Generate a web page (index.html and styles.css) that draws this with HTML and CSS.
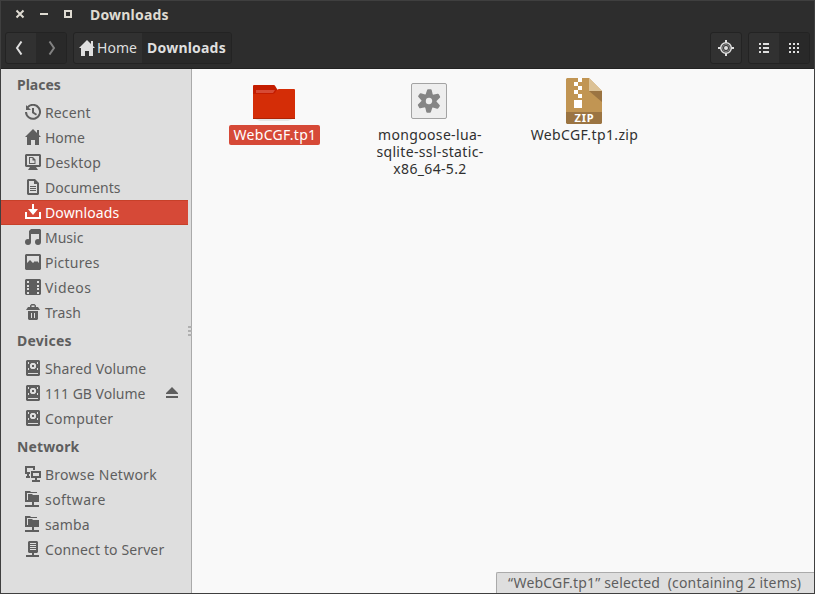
FILE: index.html
```
<!DOCTYPE html>
<html lang="en">
<head>
<meta charset="utf-8">
<title>Downloads</title>
<link rel="stylesheet" href="styles.css">
</head>
<body>
<svg class="defs" aria-hidden="true">
  <symbol id="home" viewBox="0 0 16 16"><path d="M8 0 0 8h2v8h4v-5h4v5h4V8h2l-2-2V1h-2v3z"/></symbol>
  <symbol id="drive" viewBox="0 0 16 16"><path fill-rule="evenodd" d="M2 0h12l1 1v14l-1 1H2l-1-1V1zM3 13v1h10v-1zM3 2v2h1V2zM12 2v2h1V2zM3 8v2h1V8zM12 8v2h1V8zM6.500 3 5 4.500v3L6.500 9h3L11 7.500v-3L9.500 3zM7 5h2v2H7z"/></symbol>
  <symbol id="share" viewBox="0 0 16 16"><path d="M0 0h5l1 1h6v1H2v9H0zM3 3h4l1 1h6v7H3zM7 11h2v3h5v2H0v-2h7zM0 9h3v2H0z"/></symbol>
</svg>
<div class="window">
  <header class="header">
    <div class="titlebar">
      <svg class="controls" width="58" height="10" viewBox="0 0 58 10"><path class="line" d="m1.500 1.500 7 7m0-7-7 7M25 5h8"/><path class="line" d="M50 2h6v6h-6z"/></svg>
      <h1>Downloads</h1>
    </div>
    <div class="toolbar">
      <div class="group nav">
        <button class="square back"><svg width="8" height="14" viewBox="0 0 8 14"><path class="line" d="M6.500.5 2 7l4.500 6.500"/></svg></button>
        <button class="square off"><svg width="8" height="14" viewBox="0 0 8 14"><path class="line" d="M1.500.5 6 7l-4.500 6.500"/></svg></button>
      </div>
      <div class="group path">
        <button class="crumb"><svg class="i16"><use href="#home"/></svg><span class="t-home">Home</span></button>
        <button class="crumb current"><span>Downloads</span></button>
      </div>
      <div class="group locate">
        <button class="square"><svg class="i16" viewBox="0 0 16 16"><circle cx="8" cy="8" r="5.300" class="ring"/><circle cx="8" cy="8" r="3.500" class="ring dim"/><circle cx="8" cy="8" r="2"/><path d="M7 0h2v3H7zM7 13h2v3H7zM0 7h3v2H0zM13 7h3v2h-3z"/></svg></button>
      </div>
      <div class="group views">
        <button class="square"><svg class="crisp" width="10" height="10"><path d="M0 0h2v2H0zM4 0h6v2H4zM0 4h2v2H0zM4 4h6v2H4zM0 8h2v2H0zM4 8h6v2H4z"/></svg></button>
        <button class="square on"><svg class="crisp" width="10" height="10"><path d="M0 0h2v2H0zM4 0h2v2H4zM8 0h2v2H8zM0 4h2v2H0zM4 4h2v2H4zM8 4h2v2H8zM0 8h2v2H0zM4 8h2v2H4zM8 8h2v2H8z"/></svg></button>
      </div>
    </div>
  </header>
  <main class="body">
    <aside class="sidebar">
      <h2>Places</h2>
      <ul>
        <li class="slight"><svg class="i16" viewBox="0 0 16 16"><path class="stroke" d="M2.500 3.500A7 7 0 1 1 1 8"/><path d="M1 1v5h5L4.500 4.500 3 3zM7 4h2v4l3 2-1 1.500L7 9z"/></svg><span>Recent</span></li>
        <li><svg class="i16"><use href="#home"/></svg><span>Home</span></li>
        <li class="wide"><svg class="i16" viewBox="0 0 16 16"><path fill-rule="evenodd" d="M1 0h14l1 1v11l-1 1h-4l2 3H3l2-3H1l-1-1V1zM2 2v9h12V2zM4 3h4l2.500 2.500V10H4zM5 4v5h4.500V6.500h-2V4z"/></svg><span>Desktop</span></li>
        <li><svg class="i16" viewBox="0 0 16 16"><path fill-rule="evenodd" d="M3 0h7l4 4v11l-1 1H3l-1-1V1zM4 2v12h8V5H9V2zM5 7h6v1H5zM5 9h6v1H5zM5 11h6v1H5z"/></svg><span>Documents</span></li>
        <li class="active slight"><svg class="i16" viewBox="0 0 16 16"><path d="M7 0h2v5h4L8 11 3 5h4zM0 8h2v5h12V8h2v7H0z"/></svg><span>Downloads</span></li>
        <li><svg class="i16" viewBox="0 0 16 16"><path d="M4 2 6 0h9l1 1v12h-2V5H6v8H4z"/><circle cx="3" cy="13" r="3"/><circle cx="13" cy="13" r="3"/></svg><span>Music</span></li>
        <li class="wide"><svg class="i16" viewBox="0 0 16 16"><path fill-rule="evenodd" d="M1 0h14l1 1v14l-1 1H1l-1-1V1zM2 2v7l3-3 3 3 2-2 1 1 1-1 2 2V2z"/></svg><span>Pictures</span></li>
        <li class="wider"><svg class="i16" viewBox="0 0 16 16"><path fill-rule="evenodd" d="M1 0h14l1 1v14l-1 1H1l-1-1V1zM2 2v2h2V2zM2 6v2h2V6zM2 9v2h2V9zM2 13v2h2v-2zM12 2v2h2V2zM12 6v2h2V6zM12 9v2h2V9zM12 13v2h2v-2z"/></svg><span>Videos</span></li>
        <li><svg class="i16" viewBox="0 0 16 16"><path fill-rule="evenodd" d="M5 3V1.500L6.500 0h3L11 1.500V3h2l2 3H1l2-3zM6.500 3h3V1.500h-3zM3 7h10v8l-1 1H4l-1-1zM6 9v5h1V9zM9 9v5h1V9z"/></svg><span>Trash</span></li>
      </ul>
      <h2 class="wide">Devices</h2>
      <ul>
        <li class="slight"><svg class="i16"><use href="#drive"/></svg><span>Shared Volume</span></li>
        <li><svg class="i16"><use href="#drive"/></svg><span>111 GB Volume</span><svg class="eject" width="12" height="12"><path d="m6 0 6 6v1H0V6zM0 9h12v2H0z"/></svg></li>
        <li class="wide"><svg class="i16"><use href="#drive"/></svg><span>Computer</span></li>
      </ul>
      <h2 class="slight">Network</h2>
      <ul>
        <li class="wide"><svg class="i16" viewBox="0 0 16 16"><path fill-rule="evenodd" d="M0 0h10v4H8V2H2v4h3v2H4v2h1v2H1v-2h1V8H0zM6 5h10v7h-4v2h3v2H7v-2h3v-2H6zM8 7v3h6V7z"/></svg><span>Browse Network</span></li>
        <li class="wider"><svg class="i16"><use href="#share"/></svg><span>software</span></li>
        <li class="slight"><svg class="i16"><use href="#share"/></svg><span>samba</span></li>
        <li class="slight"><svg class="i16" viewBox="0 0 16 16"><path fill-rule="evenodd" d="M4 0h8l1 1v10l-1 1H9v2h5v2H1v-2h6v-2H4l-1-1V1zM5 2v1h6V2zM5 4v1h6V4zM5 6v1h6V6zM5 8v1h6V8z"/></svg><span>Connect to Server</span></li>
      </ul>
      <div class="grip"><i></i><i></i><i></i></div>
    </aside>
    <section class="files">
      <figure>
        <svg width="48" height="48" viewBox="0 0 48 48"><path fill="#000" opacity=".08" d="M5 42h38l-5 2H10z"/><path fill="#c41d00" d="M3 9q0-1 1-1h20q1 0 1.500 1.500L27 12v10H3z"/><path fill="#d42d07" d="M3 17h20q2 0 3-3 1-2 3-2h15q1 0 1 1v29H3z"/><path fill="#d64a35" d="M6 13h19l-2 3H6z"/><path fill="#ad2404" d="M3 41h42v1H3z"/></svg>
        <figcaption class="selected">WebCGF.tp1</figcaption>
      </figure>
      <figure>
        <svg width="48" height="48" viewBox="0 0 48 48"><rect x="6.500" y="6.500" width="35" height="35" rx="1.500" fill="#eee" stroke="#a3a3a3"/><g transform="translate(24 24) rotate(2)" fill="#858585"><path id="tooth" d="M-2.300-11q.2-.8 1-.8h2.600q.8 0 1 .8L4-5h-8z"/><use href="#tooth" transform="rotate(60)"/><use href="#tooth" transform="rotate(120)"/><use href="#tooth" transform="rotate(180)"/><use href="#tooth" transform="rotate(240)"/><use href="#tooth" transform="rotate(300)"/><circle r="5.200" fill="none" stroke="#858585" stroke-width="4"/></g></svg>
        <figcaption class="mongoose">mongoose-lua-<br>sqlite-ssl-static-<br>x86_64-5.2</figcaption>
      </figure>
      <figure>
        <svg width="48" height="48" viewBox="0 0 48 48"><path fill="#c19553" d="M7 1h22l13 13v21H6V2z"/><path fill="#9b7442" d="m29 14 13 11V14z"/><path fill="#dcc296" d="M29 1v13h13z"/><path fill="#9b7442" d="M6 35h36v11l-1 1H7l-1-1z"/><path fill="#fff" d="M18 1h4v4h-4zM14 5h4v4h-4zM18 9h4v4h-4zM14 13h4v4h-4zM18 17h4v4h-4zM14 23h8v8h-8z"/><text x="24.500" y="45">ZIP</text></svg>
        <figcaption class="zip">WebCGF.tp1.zip</figcaption>
      </figure>
      <footer class="status">“WebCGF.tp1” selected&nbsp; (containing 2 items)</footer>
    </section>
  </main>
</div>
</body>
</html>
```

FILE: styles.css
```
* { box-sizing: border-box; }
body { margin: 0; font: 14px/17px "Noto Sans", "Open Sans", sans-serif; }
.defs { position: absolute; width: 0; height: 0; }
svg { display: block; flex: none; fill: currentColor; }
.i16 { width: 16px; height: 16px; }
.crisp { shape-rendering: crispEdges; }
.line, .ring, .stroke { fill: none; stroke: currentColor; stroke-width: 2; }
.ring { stroke-width: 1.5; }
.dim { stroke-width: 1; opacity: .5; }
.slight { letter-spacing: .12px; }
.wide { letter-spacing: .25px; }
.wider { letter-spacing: .45px; }

.window {
  width: 815px; height: 594px;
  display: flex; flex-direction: column;
  border: 1px solid #3f3f3f;
  background: #f9f9f9;
}
.header { height: 68px; background: #2d2d2d; color: #dfdbd2; border-bottom: 1px solid #222; }
.titlebar { height: 27px; display: flex; align-items: flex-start; padding: 5px 0 0 14px; gap: 17px; }
.controls { margin-top: 3px; }
h1 { margin: 0; font-size: 14px; line-height: 17px; font-weight: 700; letter-spacing: .2px; }
.toolbar { display: flex; padding: 4px 4px 0; height: 36px; }
.group { display: flex; height: 32px; border: 1px solid #232323; border-radius: 3px; overflow: hidden; background: #313131; }
.nav, .views { width: 62px; }
.path { margin-left: 6px; width: 159px; }
.locate { margin-left: auto; width: 32px; }
.views { margin-left: 6px; }
button { border: 0; padding: 0; background: none; color: #dfdfdf; font: inherit; display: flex; align-items: center; justify-content: center; }
.square { width: 30px; }
.back { padding-right: 4px; }
.off { background: #292929; color: #828282; padding-left: 2px; }
.on, .current { background: #292929; }
.crumb { width: 68px; gap: 2px; padding-bottom: 1px; }
.current { width: 89px; font-weight: 700; letter-spacing: .2px; }

.body { flex: 1; display: flex; min-height: 0; }
.sidebar { position: relative; width: 191px; background: #dedede; border-right: 1px solid #aaa; color: #5e5e5e; }
h2 { margin: 0; height: 31px; padding: 7px 0 0 16px; font-size: 14px; line-height: 17px; font-weight: 700; }
ul { list-style: none; margin: 0; padding: 0 3px 0 0; }
li { height: 25px; display: flex; align-items: flex-start; gap: 4px; padding: 4px 10px 0 24px; white-space: nowrap; }
.active { background: #d64937; color: #fff; border: solid #c74029; border-width: 1px 0; padding-top: 3px; }
.eject { margin: 2px 0 0 auto; }
.grip { position: absolute; right: -1px; top: 257px; display: grid; gap: 2px; }
.grip i { width: 4px; height: 2px; background: #b0b0b0; }

.files { position: relative; flex: 1; display: flex; align-items: flex-start; padding: 8px 0 0 5px; color: #303030; }
figure { margin: 0; width: 155px; display: flex; flex-direction: column; align-items: center; }
figure > svg { margin-right: 1px; }
figcaption { padding: 1px 5px 2px; text-align: center; white-space: nowrap; border-radius: 2px; }
.selected { background: #d64937; color: #fff; letter-spacing: .3px; padding-right: 4px; }
.mongoose { letter-spacing: .34px; padding-left: 6px; }
.zip { letter-spacing: .38px; }
text { font: 700 11px "Noto Sans", sans-serif; fill: #fff; text-anchor: middle; letter-spacing: .9px; }
.status { position: absolute; right: 0; bottom: 0; width: 318px; height: 21px; padding: 1px 0 0 11px; background: #dedede; border: solid #aaa; border-width: 1px 0 0 1px; border-radius: 2px 0 0; color: #5e5e5e; white-space: nowrap; letter-spacing: .18px; }
```
